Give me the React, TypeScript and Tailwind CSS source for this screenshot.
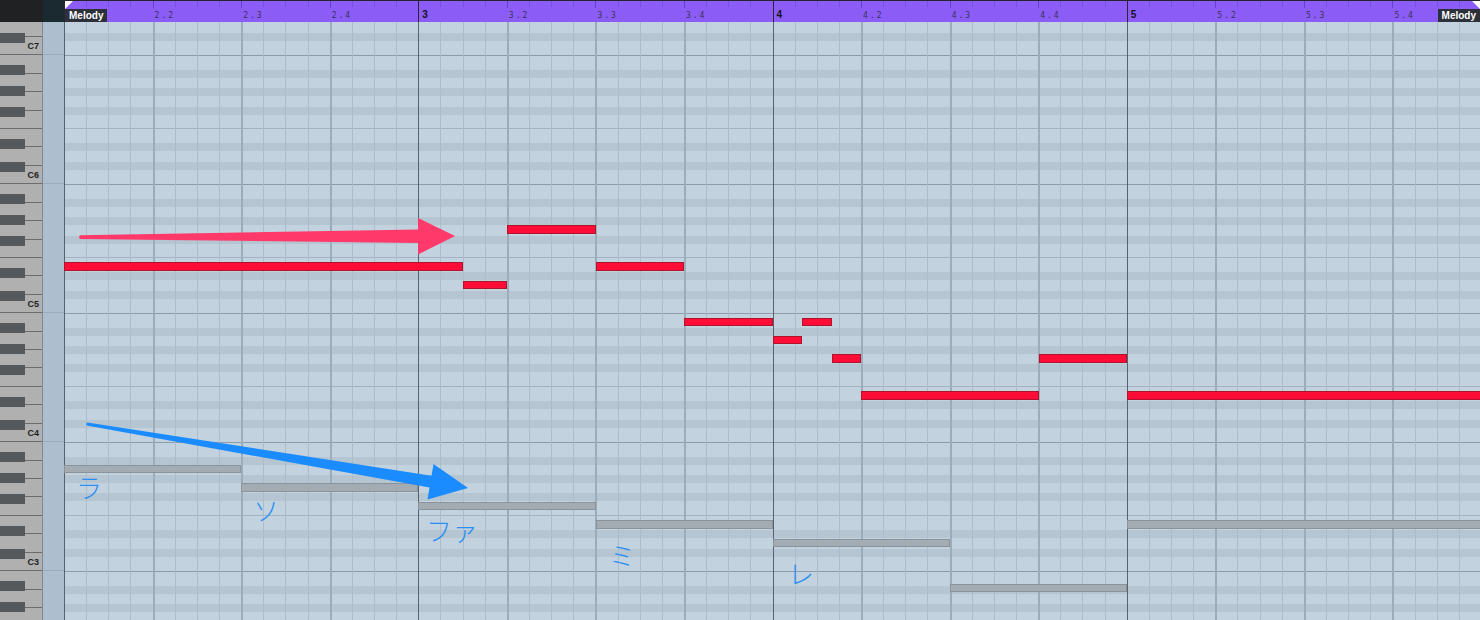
import React from "react";

type Note = { w: number; start: number; len: number; dy?: number };

// one 16th note wide, one white key tall
const COL = 22.15;
const ROW = 18.43;
// top edge of D7 (white key 50), measured from the top of the grid
const TOP_Y = -3.55;

const rowTop = (w: number) => TOP_Y + (50 - w) * ROW;

const melody: Note[] = [
  { w: 37, start: 0, len: 18 },
  { w: 36, start: 18, len: 2 },
  { w: 39, start: 20, len: 4 },
  { w: 37, start: 24, len: 4 },
  { w: 34, start: 28, len: 4 },
  { w: 33, start: 32, len: 4 / 3 },
  { w: 34, start: 32 + 4 / 3, len: 4 / 3 },
  { w: 32, start: 32 + 8 / 3, len: 4 / 3 },
  { w: 30, start: 36, len: 8 },
  { w: 32, start: 44, len: 4 },
  { w: 30, start: 48, len: 20 },
];

const bass: Note[] = [
  { w: 26, start: 0, len: 8 },
  { w: 25, start: 8, len: 8 },
  { w: 24, start: 16, len: 8 },
  { w: 23, start: 24, len: 8 },
  { w: 22, start: 32, len: 8 },
  { w: 20, start: 40, len: 8, dy: 8 },
  { w: 23, start: 48, len: 20 },
];

const lyrics = [
  { text: "ラ", x: 12, y: 452 },
  { text: "ソ", x: 189, y: 475 },
  { text: "ファ", x: 362, y: 495 },
  { text: "ミ", x: 545, y: 520 },
  { text: "レ", x: 724, y: 538 },
];

// one octave of the grid, top to bottom, starting under the D# stripe
const octave = ["short", "stripe", "tall", "oct", "tall", "stripe", "short", "stripe", "short", "stripe", "tall", "ef", "tall", "stripe"];

const segClass: Record<string, string> = {
  short: "h-[10.43px] shrink-0",
  tall: "h-[13.93px] shrink-0",
  stripe: "h-[8px] shrink-0 bg-[#b5c5d2]",
  oct: "h-px shrink-0 bg-[#8c9cab]",
  ef: "h-px shrink-0 bg-[#a2b2c0]",
};

const whiteKeys = Array.from({ length: 34 }, (_, i) => 50 - i);

const blackKeys = [7, 6, 5, 4, 3, 2].flatMap((o) => {
  const c = 140 + (6 - o) * 129;
  return [c, c - 23, c - 55, c - 76, c - 97];
}).filter((y) => y > -12 && y < 600);

const Ruler = () => (
  <div className="relative flex-1 flex overflow-hidden bg-[#8b5cf6] border-t border-[#25232b]">
    {Array.from({ length: 64 }, (_, i) => {
      const bar = i % 16 === 0;
      const beat = i % 4 === 0;
      const label = `${2 + Math.floor(i / 16)}.${(i % 16) / 4 + 1}`;
      return (
        <div key={i} className="shrink-0 w-[22.15px] flex">
          <div
            className={
              bar
                ? "shrink-0 w-px h-full bg-[#2a2537]"
                : beat
                ? "shrink-0 w-px h-[7px] bg-[#6541c4]"
                : "shrink-0 w-px h-[6px] bg-[#7852dc]"
            }
          />
          {bar && i > 0 ? (
            <span className="shrink-0 mt-[9px] ml-[3px] text-[10px] font-bold leading-none text-[#15121c]">
              {2 + i / 16}
            </span>
          ) : beat && !bar ? (
            <span className="shrink-0 mt-[11px] ml-px text-[8px] tracking-[2px] leading-none whitespace-nowrap text-[#3b3350] font-['DejaVu_Sans_Mono',monospace]">
              {label}
            </span>
          ) : null}
        </div>
      );
    })}
    <div className="absolute left-[1px] top-[8px] h-[13px] px-[4px] flex items-center bg-[#2b3039] text-white text-[10px] font-bold leading-none">
      Melody
    </div>
    <div className="absolute right-0 top-[8px] h-[13px] px-[4px] flex items-center bg-[#2b3039] text-white text-[10px] font-bold leading-none">
      Melody
    </div>
    <svg className="absolute left-[1px] top-0" width="8" height="8">
      <polygon points="0,0 8,0 0,8" fill="#ffffff" />
    </svg>
    <svg className="absolute right-0 top-0" width="8" height="8">
      <polygon points="0,0 8,0 8,8" fill="#ffffff" />
    </svg>
  </div>
);

const Keyboard = () => (
  <div className="relative w-[43px] shrink-0 overflow-hidden bg-[#b0b0b0] border-r border-[#7d8893]">
    <div className="-mt-[3.55px] flex flex-col">
      {whiteKeys.map((w) => (
        <div
          key={w}
          className="h-[18.43px] shrink-0 flex items-end justify-end pr-[3px] pb-[3px] border-b border-[#6c6c6c]"
        >
          {w % 7 === 0 && (
            <span className="text-[9px] leading-none font-semibold text-[#1f1f1f]">C{w / 7}</span>
          )}
        </div>
      ))}
    </div>
    {blackKeys.map((y) => (
      <div key={y} className="absolute left-0 w-[25px] h-[10px] bg-[#56595c]" style={{ top: y }} />
    ))}
  </div>
);

const Strip = () => (
  <div className="w-[21px] shrink-0 overflow-hidden bg-[#adbecf]">
    <div className="-mt-[3.55px] flex flex-col">
      {whiteKeys.map((w) => (
        <div
          key={w}
          className={w % 7 === 0 ? "h-[18.43px] shrink-0 border-b border-[#9aabbb]" : "h-[18.43px] shrink-0"}
        />
      ))}
    </div>
  </div>
);

const Grid = () => (
  <div className="relative flex-1 overflow-hidden bg-[#c3d2df]">
    <div className="-mt-[7.55px] flex flex-col">
      <div className={segClass.stripe} />
      {Array.from({ length: 5 }, (_, o) =>
        octave.map((s, i) => <div key={`${o}-${i}`} className={segClass[s]} />)
      )}
    </div>

    <div className="absolute inset-0 flex">
      {Array.from({ length: 64 }, (_, i) => (
        <div
          key={i}
          className={
            i % 16 === 0
              ? "shrink-0 w-[22.15px] h-full border-l border-[#56636f]"
              : i % 4 === 0
              ? "shrink-0 w-[22.15px] h-full border-l-2 border-[#9bacbb]"
              : "shrink-0 w-[22.15px] h-full border-l border-[#adbccb]"
          }
        />
      ))}
    </div>

    {bass.map((n, i) => (
      <div
        key={`b${i}`}
        className="absolute h-[8.3px] bg-[#a3abb3] border border-[#8a929a]"
        style={{ left: n.start * COL, top: rowTop(n.w) + 4.2 + (n.dy ?? 0), width: n.len * COL }}
      />
    ))}
    {melody.map((n, i) => (
      <div
        key={`m${i}`}
        className="absolute h-[8.3px] bg-[#ff0d37] border border-[#b0142d]"
        style={{ left: n.start * COL, top: rowTop(n.w) + 4.2, width: n.len * COL }}
      />
    ))}

    <svg className="absolute inset-0" width="1416" height="598" viewBox="64 22 1416 598">
      <path
        d="M80,235.3 L418,229.5 L418,218 L455,236 L418,254.5 L418,243 L80,239 Q78.3,237.2 80,235.3 Z"
        fill="#ff3a6a"
      />
      <path
        d="M87.3,422.4 L431.5,475.8 L433.5,464 L468,488 L427.5,499.4 L429.5,487.6 L86.8,425.6 Q85.6,423.8 87.3,422.4 Z"
        fill="#1a8cff"
      />
    </svg>

    {lyrics.map((l) => (
      <span
        key={l.text}
        className="absolute text-[26px] leading-none font-light text-[#2b8ff4] font-['Noto_Sans_CJK_JP',sans-serif]"
        style={{ left: l.x, top: l.y }}
      >
        {l.text}
      </span>
    ))}
  </div>
);

export default function App() {
  return (
    <div className="w-[1480px] h-[620px] overflow-hidden flex flex-col font-['Liberation_Sans',Arial,sans-serif]">
      <header className="h-[22px] shrink-0 flex">
        <div className="w-[43px] shrink-0 bg-[#1f2123]" />
        <div className="w-[21px] shrink-0 bg-[#1b2930]" />
        <Ruler />
      </header>
      <div className="flex-1 min-h-0 flex">
        <Keyboard />
        <Strip />
        <Grid />
      </div>
    </div>
  );
}
